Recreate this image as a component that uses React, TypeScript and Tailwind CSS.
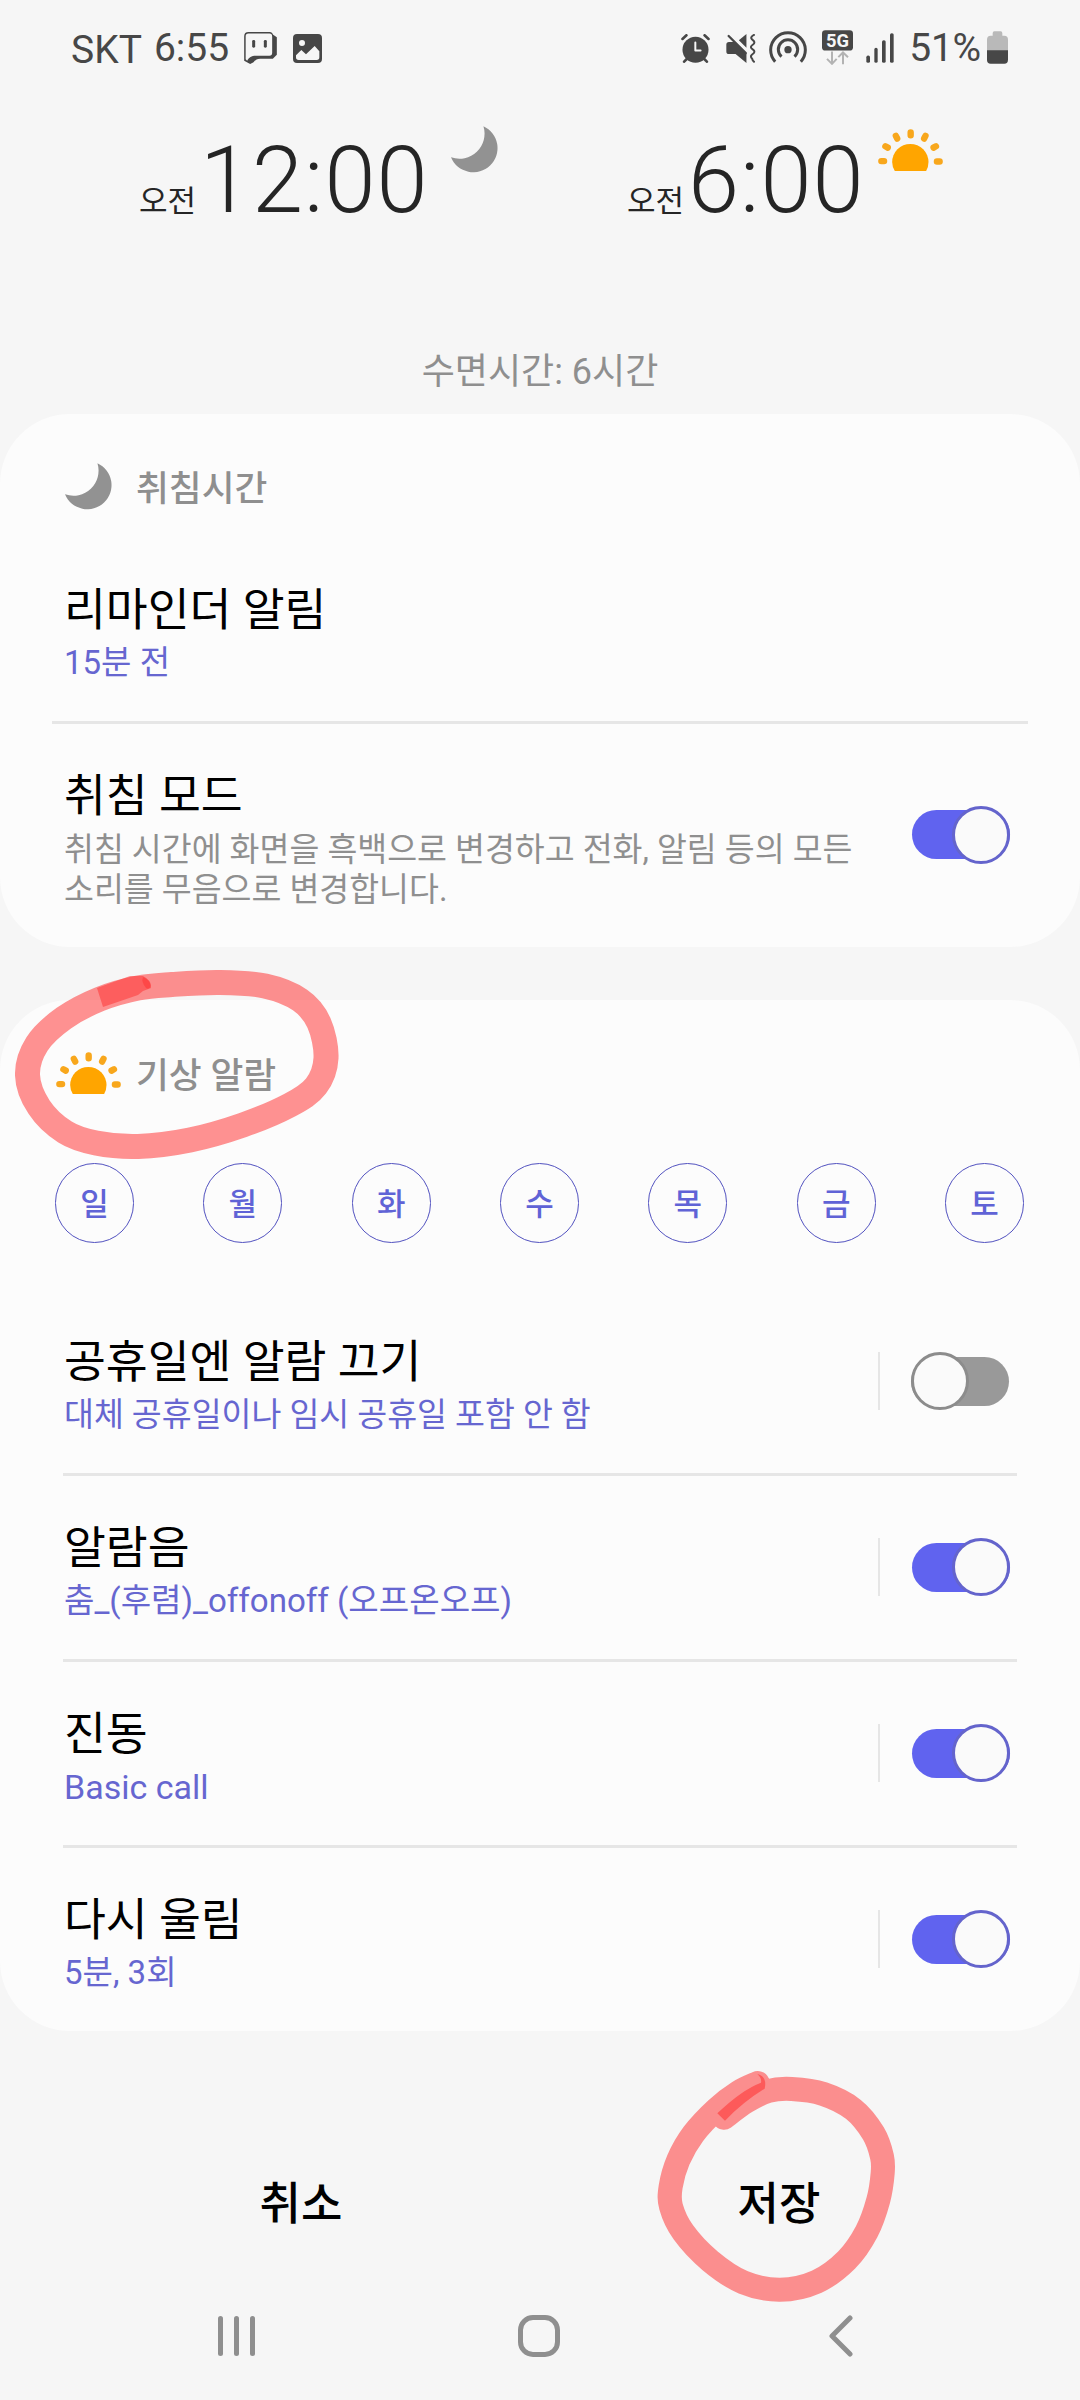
import { useState } from 'react'
import type { ReactNode } from 'react'
import clsx from 'clsx'

const days = ['일', '월', '화', '수', '목', '금', '토']

const wakeRows = [
  { id: 'holiday', title: '공휴일엔 알람 끄기', sub: '대체 공휴일이나 임시 공휴일 포함 안 함', on: false, size: 'text-[32.5px]' },
  { id: 'sound', title: '알람음', sub: '춤_(후렴)_offonoff (오프온오프)', on: true, size: 'text-[33.1px]' },
  { id: 'vibrate', title: '진동', sub: 'Basic call', on: true, size: 'text-[34px]' },
  { id: 'snooze', title: '다시 울림', sub: '5분, 3회', on: true, size: 'text-[33px]' }
]

type Point = [number, number]

// Runs a smooth curve through the given points
function smoothPath(points: Point[], closed = false) {
  const n = points.length
  const at = (i: number) => (closed ? points[(i + n) % n] : points[Math.max(0, Math.min(n - 1, i))])
  let d = `M${points[0][0]} ${points[0][1]}`
  for (let i = 0; i < (closed ? n : n - 1); i++) {
    const [p0, p1, p2, p3] = [at(i - 1), at(i), at(i + 1), at(i + 2)]
    d += `C${p1[0] + (p2[0] - p0[0]) / 6} ${p1[1] + (p2[1] - p0[1]) / 6} ${p2[0] - (p3[0] - p1[0]) / 6} ${p2[1] - (p3[1] - p1[1]) / 6} ${p2[0]} ${p2[1]}`
  }
  return d
}

const wakeLoop: Point[] = [
  [138, 988], [100, 999], [64, 1018], [37, 1044], [27.5, 1075], [39, 1107], [65, 1132], [96, 1143], [138, 1146.5],
  [190, 1140], [243, 1125], [290, 1105], [316, 1086], [326, 1058], [319, 1023], [300, 1000], [265, 986], [220, 982.5], [172, 984.5]
]

const saveLoop: Point[] = [
  [372, 263], [440, 214], [505, 183], [575, 177], [670, 192], [760, 238], [820, 310], [846, 380], [848, 430], [835, 510],
  [800, 605], [740, 690], [650, 755], [540, 779], [430, 757], [330, 692], [250, 607], [213, 530], [212, 470], [235, 390], [280, 312],
  [350, 237], [415, 187], [473, 159]
]

function Moon() {
  return (
    <svg viewBox="0 0 142 141" className="h-[47px] w-[47px] shrink-0 fill-[#929292]">
      <path d="M98 0A73 73 0 1 1 0 94A76 76 0 0 0 98 0Z" />
    </svg>
  )
}

function Sun() {
  return (
    <svg viewBox="0 0 193 124" className="h-[42px] w-[65px] shrink-0">
      <path fill="#ffa500" d="M50 124Q42 112 42 98A54 54 0 0 1 150 98Q150 112 143 124Z" />
      <g stroke="#f8a71c" strokeWidth="19" strokeLinecap="round">
        <path d="M97 10V18M53 20L57 28M141 20L137 28M22 51L29 55M172 51L165 55M10 95H18M175 96H183" />
      </g>
    </svg>
  )
}

function ChatIcon() {
  return (
    <svg viewBox="0 0 98 96" className="h-[32px] w-[33px] fill-[#474747]">
      <path
        fillRule="evenodd"
        d="M13 0H78Q84 0 87 8L98 16V68L86 80H48C38 80 34 84 28 91L18 96L0 86V13Q0 0 13 0ZM13 4.500Q4.500 4.500 4.500 13V82L9 86C15 75 22 71 38 71H76Q84 71 84 62V14Q84 4.500 76 4.500Z"
      />
      <rect x="24" y="24" width="9" height="23" rx="4" />
      <rect x="59" y="24" width="9" height="23" rx="4" />
    </svg>
  )
}

function ImageIcon() {
  return (
    <svg viewBox="0 0 87 87" className="h-[29px] w-[29px] fill-[#474747]">
      <path
        fillRule="evenodd"
        d="M12 0H75Q87 0 87 12V75Q87 87 75 87H12Q0 87 0 75V12Q0 0 12 0ZM27 18A9 9 0 1 0 27 36A9 9 0 1 0 27 18ZM9 64V70Q9 78 17 78H71Q79 78 79 70V52L65 36L39 61L25 48Z"
      />
    </svg>
  )
}

function AlarmIcon() {
  return (
    <svg viewBox="0 0 87 88" className="h-[29px] w-[29px]" fill="none" strokeLinecap="round">
      <circle cx="43.500" cy="48" r="39.500" fill="#474747" />
      <path stroke="#474747" strokeWidth="8" d="M4 15L16 4M71 4L83 15M17 76L9 84M70 76L78 84" />
      <path stroke="#f6f6f6" strokeWidth="6" strokeLinejoin="round" d="M43 26V50H59" />
    </svg>
  )
}

function MuteIcon() {
  return (
    <svg viewBox="0 0 89 88" className="h-[29px] w-[30px]" fill="none" stroke="#474747" strokeLinecap="round">
      <path fill="#474747" stroke="none" d="M8 24H24L61 60V88L28 61H8Q0 61 0 53V32Q0 24 8 24Z" />
      <path fill="#474747" stroke="none" d="M61 0V42L38 19Z" />
      <path strokeWidth="7" d="M7 6L59 58" />
      <path strokeWidth="6" strokeLinejoin="round" d="M84 3Q72 9 77 15L84 22Q87 28 81 32Q72 38 76 43L84 50Q87 56 81 60Q72 66 76 72Q80 76 80 80L84 84" />
    </svg>
  )
}

function HotspotIcon() {
  return (
    <svg viewBox="0 0 113 96" className="h-[32px] w-[38px]" fill="none" stroke="#474747">
      <circle cx="56.500" cy="56" r="11" fill="#474747" stroke="none" />
      <path strokeWidth="9" d="M37 77A29 29 0 1 1 76 77" />
      <path strokeWidth="9" d="M18 92A52 52 0 1 1 95 92" />
    </svg>
  )
}

function FiveGIcon() {
  return (
    <svg viewBox="0 0 93 104" className="h-[35px] w-[31px]" fill="none">
      <rect width="93" height="61" rx="10" fill="#474747" />
      <text x="46.500" y="51" textAnchor="middle" fontSize="55" className="fill-[#f6f6f6] font-['Roboto',sans-serif] font-bold">
        5G
      </text>
      <path stroke="#b3b3b3" strokeWidth="6" d="M30 64V100M15 86L30 101L44 86M63 102V67M49 81L63 67L78 81" />
    </svg>
  )
}

function SignalIcon() {
  return (
    <svg viewBox="0 0 84 89" className="h-[30px] w-[28px] fill-[#474747]">
      <rect x="1" y="67" width="11" height="22" rx="5" />
      <rect x="25" y="44" width="10" height="45" rx="5" />
      <rect x="48" y="21" width="11" height="68" rx="5" />
      <rect x="72" y="0" width="11" height="89" rx="5" />
    </svg>
  )
}

function BatteryIcon() {
  return (
    <svg viewBox="0 0 63 98" className="h-[33px] w-[21px]">
      <path fill="#b9b9b9" d="M22 0H41Q46 0 46 6V14H52Q63 14 63 26V60H0V26Q0 14 11 14H17V6Q17 0 22 0Z" />
      <path fill="#474747" d="M0 57H63V86Q63 98 52 98H11Q0 98 0 86Z" />
    </svg>
  )
}

function StatusBar() {
  return (
    <header className="flex h-[94px] items-center justify-between pl-[71px] pr-[72px] text-[39px] leading-[46px] text-[#474747]">
      <div className="flex items-center">
        <span className="pt-[6px]">SKT</span>
        <span className="ml-[12px] pt-[1px]">6:55</span>
        <span className="ml-[15px] mt-[2px]"><ChatIcon /></span>
        <span className="ml-[16px] mt-[3px]"><ImageIcon /></span>
      </div>
      <div className="flex items-center">
        <span className="mt-[2px]"><AlarmIcon /></span>
        <span className="ml-[16px] mt-[2px]"><MuteIcon /></span>
        <span className="ml-[13px]"><HotspotIcon /></span>
        <span className="ml-[15px]"><FiveGIcon /></span>
        <span className="ml-[13px] mt-[2px]"><SignalIcon /></span>
        <span className="ml-[15px] pt-[1px] tracking-[-0.2px]">51%</span>
        <span className="ml-[6px] mt-[1px]"><BatteryIcon /></span>
      </div>
    </header>
  )
}

function Toggle({ initial }: { initial: boolean }) {
  const [on, setOn] = useState(initial)
  return (
    <button
      role="switch"
      aria-checked={on}
      onClick={() => setOn(!on)}
      className={clsx('flex h-[49px] w-[98px] shrink-0 items-center rounded-full', on ? 'justify-end bg-[#6063ef]' : '-translate-x-px justify-start bg-[#999]')}
    >
      <span className={clsx('h-[58px] w-[58px] shrink-0 rounded-full border-3 bg-[#fafafa]', on ? 'border-[#6464cc]' : 'border-[#8c8c8c]')} />
    </button>
  )
}

function Row({ title, children, control }: { title: string; children: ReactNode; control?: ReactNode }) {
  return (
    <div className="flex justify-between pl-[64px] pr-[70px] pt-[43px]">
      <div className="pt-[0.5px]">
        <p className="text-[45.5px] leading-[58px] text-black">{title}</p>
        {children}
      </div>
      {control}
    </div>
  )
}

function TimeBlock({ time, children }: { time: string; children: ReactNode }) {
  return (
    <div className="flex items-start">
      <div className="flex items-baseline text-[#252525]">
        <span className="text-[31px]">오전</span>
        <span className="ml-[4px] text-[92px] font-light leading-[100px] tracking-[1px]">{time}</span>
      </div>
      {children}
    </div>
  )
}

export default function App() {
  return (
    <div className="relative h-[2400px] w-[1080px] overflow-hidden bg-[#f6f6f6] font-['Roboto','Noto_Sans_CJK_KR',sans-serif]">
      <StatusBar />

      <section className="h-[320px]">
        <div className="flex h-[245px] pl-[139px] pt-[37px]">
          <div className="w-[488px]">
            <TimeBlock time="12:00">
              <span className="ml-[22px] mt-[-5px]"><Moon /></span>
            </TimeBlock>
          </div>
          <TimeBlock time="6:00">
            <span className="ml-[14px] mt-[-2px]"><Sun /></span>
          </TimeBlock>
        </div>
        <p className="text-center text-[36px] leading-[66px] text-[#8f8f8f]">수면시간: 6시간</p>
      </section>

      {/* Bedtime */}
      <section className="h-[533px] rounded-[70px] bg-[#fcfcfc]">
        <div className="flex h-[124px] items-start pl-[65px] pt-[49px]">
          <Moon />
          <h2 className="ml-[24px] mt-[1px] text-[35.7px] font-medium leading-[50px] text-[#8f8f8f]">취침시간</h2>
        </div>
        <div className="h-[183px]">
          <Row title="리마인더 알림">
            <p className="text-[33px] leading-[46px] text-[#6666d0]">15분 전</p>
          </Row>
        </div>
        <div className="mx-[52px] h-[3px] bg-[#e6e6e6]" />
        <Row title="취침 모드" control={<div className="mt-[43px]"><Toggle initial={true} /></div>}>
          <p className="mt-[4px] whitespace-nowrap text-[32.5px] leading-[40px] text-[#8f8f8f]">
            취침 시간에 화면을 흑백으로 변경하고 전화, 알림 등의 모든
            <br />
            소리를 무음으로 변경합니다.
          </p>
        </Row>
      </section>

      {/* Wake-up alarm */}
      <section className="mt-[53px] h-[1031px] rounded-[70px] bg-[#fcfcfc]">
        <div className="flex h-[163px] items-start pl-[56px] pt-[52px]">
          <Sun />
          <h2 className="ml-[15px] mt-[-1px] text-[35.7px] font-medium leading-[50px] text-[#8f8f8f]">기상 알람</h2>
        </div>
        <div className="flex h-[127px] items-start justify-between pl-[55px] pr-[56px]">
          {days.map((day) => (
            <button
              key={day}
              className="flex h-[80px] w-[79px] items-center justify-center rounded-full border border-[#5252c0] pt-[2px] text-[31px] font-medium leading-none text-[#6063d6]"
            >
              {day}
            </button>
          ))}
        </div>
        {wakeRows.map((row, i) => (
          <div key={row.id} className={i === 0 ? 'h-[183px]' : 'h-[186px]'}>
            {i > 0 && <div className="ml-[63px] h-[3px] w-[954px] bg-[#e6e6e6]" />}
            <Row
              title={row.title}
              control={
                <div className="mt-[19px] flex h-[58px] items-center gap-[32px]">
                  <div className="h-[58px] w-[2px] bg-[#e6e6e6]" />
                  <Toggle initial={row.on} />
                </div>
              }
            >
              <p className={clsx('leading-[46px] text-[#6666d0]', row.size)}>{row.sub}</p>
            </Row>
          </div>
        ))}
      </section>

      <div className="grid grid-cols-2 px-[62px] pt-[144px] text-[45px] font-medium leading-[60px] text-black">
        <button>취소</button>
        <button>저장</button>
      </div>

      {/* System navigation */}
      <nav className="flex items-center justify-between pl-[218px] pr-[227px] pt-[80px]">
        <div className="flex gap-[11px]">
          <span className="h-[40px] w-[5px] rounded-full bg-[#8f8f8f]" />
          <span className="h-[40px] w-[5px] rounded-full bg-[#8f8f8f]" />
          <span className="h-[40px] w-[5px] rounded-full bg-[#8f8f8f]" />
        </div>
        <div className="mr-[7px] h-[42px] w-[42px] rounded-[15px] border-5 border-[#8f8f8f]" />
        <svg viewBox="0 0 24 42" className="h-[42px] w-[24px]" fill="none" stroke="#8f8f8f" strokeWidth="5" strokeLinecap="round" strokeLinejoin="round">
          <path d="M21 3L3 21L21 39" />
        </svg>
      </nav>

      {/* Red marker strokes */}
      <svg viewBox="0 950 360 230" className="pointer-events-none absolute left-0 top-[950px] h-[230px] w-[360px]" fill="none">
        <path d={smoothPath(wakeLoop, true)} stroke="#ff2626" strokeOpacity="0.5" strokeWidth="25" />
        <path d="M97 988L130 976L143 976Q151 980 151 988L143 991L138 995L103 1007Z" fill="#ff2626" fillOpacity="0.46" />
        <path d="M143 977Q151 980 151 986Q149 990 146 988Q141 982 143 977Z" fill="#ff2626" fillOpacity="0.4" />
      </svg>
      <svg viewBox="0 0 1080 900" className="pointer-events-none absolute left-[600px] top-[2030px] h-[300px] w-[360px]" fill="none">
        <path d={smoothPath(saveLoop)} stroke="#ff2626" strokeOpacity="0.5" strokeWidth="72" strokeLinecap="round" strokeLinejoin="round" />
        <path d="M352 250Q425 180 483 158Q486 145 472 132Q502 140 494 176Q430 215 375 272Z" fill="#ff2626" fillOpacity="0.5" />
      </svg>
    </div>
  )
}
